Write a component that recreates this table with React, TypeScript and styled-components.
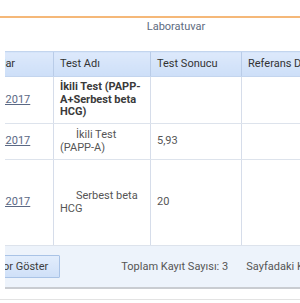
import React, { FC, useLayoutEffect, useRef } from "react";
import styled, { createGlobalStyle } from "styled-components";

const GlobalStyle = createGlobalStyle`
  html, body {
    margin: 0;
    padding: 0;
    background: #ffffff;
    font-family: Roboto, "Liberation Sans", sans-serif;
  }
`;

type Row = {
  date: string;
  name: string;
  result: string;
  bold?: boolean;
  indent?: boolean;
  height: number;
};

const Rows: Array<Row> = [
  { date: "08.03.2017", name: "İkili Test (PAPP-A+Serbest beta HCG)", result: "", bold: true, height: 47 },
  { date: "08.03.2017", name: "İkili Test (PAPP-A)", result: "5,93", indent: true, height: 36 },
  { date: "08.03.2017", name: "Serbest beta HCG", result: "20", indent: true, height: 86 },
];

const Page = styled.div`
  width: 300px;
  height: 303px;
  overflow: hidden;
`;

const TopBar = styled.div`
  height: 16px;
  border-bottom: 2px solid #f5b878;
`;

const Panel = styled.div`
  margin-left: 5px;
  overflow: hidden;
`;

const Content = styled.div`
  width: 424px;
`;

const Title = styled.div`
  padding-top: 2px;
  height: 14px;
  line-height: 14px;
  margin-bottom: 17px;
  text-align: center;
  font-size: 11px;
  color: #5d6b80;
`;

const Table = styled.table`
  width: 424px;
  table-layout: fixed;
  border-collapse: collapse;
  font-size: 11px;
  line-height: 12.6px;
`;

const HeadCell = styled.th<{ $pad?: number }>`
  height: 24px;
  padding: 0 6px 0 ${(p) => p.$pad ?? 6}px;
  text-align: left;
  font-weight: normal;
  color: #333;
  white-space: nowrap;
  overflow: hidden;
  background: linear-gradient(#dde9fb, #cddff8);
  border-top: 1px solid #c3d5ee;
  border-bottom: 1px solid #c3d5ee;
  border-left: 1px solid #b9cce8;
`;

const BodyRow = styled.tr<{ $h: number }>`
  height: ${(p) => p.$h}px;
`;

const Cell = styled.td<{ $bold?: boolean; $indent?: boolean }>`
  padding: 0 6px;
  vertical-align: middle;
  color: ${(p) => (p.$bold ? "#3a3a3a" : "#555")};
  font-weight: ${(p) => (p.$bold ? "bold" : "normal")};
  text-indent: ${(p) => (p.$indent ? "16px" : "0")};
  border-bottom: 1px solid #dde3ec;
  border-left: 1px solid #d6ddea;
`;

const DateCell = styled(Cell)`
  padding-left: 10px;
  white-space: nowrap;
`;

const DateLink = styled.a`
  color: #5a6884;
  text-decoration: underline;
`;

const Footer = styled.div`
  height: 41px;
  padding-left: 8px;
  display: flex;
  align-items: center;
  background: #edf3fb;
  border-bottom: 2px solid #c9ccd1;
  font-size: 11px;
  color: #555;
`;

const Button = styled.button`
  height: 23px;
  padding: 0 11px;
  margin-right: 61px;
  font-family: inherit;
  font-size: 11px;
  color: #3d3d3d;
  background: linear-gradient(#e2edfc, #cfe0f8);
  border: 1px solid #a9c3e6;
  border-radius: 1px;
  white-space: nowrap;
`;

const Info = styled.span`
  white-space: nowrap;
  margin-right: 18px;
`;

const BottomLine = styled.div`
  margin-top: 10px;
  border-top: 1px solid #e3e3e3;
`;

const App: FC = () => {
  const scrollRef = useRef<HTMLDivElement>(null);

  useLayoutEffect(() => {
    if (scrollRef.current) scrollRef.current.scrollLeft = 41;
  }, []);

  return (
    <Page>
      <GlobalStyle />
      <TopBar />
      <Panel ref={scrollRef}>
        <Content>
          <Title>Laboratuvar</Title>
          <Table>
            <colgroup>
              <col style={{ width: 89 }} />
              <col style={{ width: 97 }} />
              <col style={{ width: 91 }} />
              <col />
            </colgroup>
            <thead>
              <tr>
                <HeadCell $pad={7}>Sonuçlar</HeadCell>
                <HeadCell>Test Adı</HeadCell>
                <HeadCell>Test Sonucu</HeadCell>
                <HeadCell>Referans Değerleri</HeadCell>
              </tr>
            </thead>
            <tbody>
              {Rows.map((row, id) => (
                <BodyRow key={id} $h={row.height}>
                  <DateCell>
                    <DateLink href="#">{row.date}</DateLink>
                  </DateCell>
                  <Cell $bold={row.bold} $indent={row.indent}>
                    {row.name}
                  </Cell>
                  <Cell>{row.result}</Cell>
                  <Cell />
                </BodyRow>
              ))}
            </tbody>
          </Table>
          <Footer>
            <Button>Rapor Göster</Button>
            <Info>Toplam Kayıt Sayısı: 3</Info>
            <Info>Sayfadaki Kayıt Sayısı: 3</Info>
          </Footer>
        </Content>
      </Panel>
      <BottomLine />
    </Page>
  );
};

export default App;
